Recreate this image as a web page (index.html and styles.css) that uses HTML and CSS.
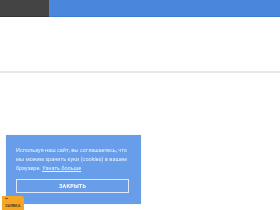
FILE: index.html
```html
<!DOCTYPE html>
<html lang="ru">
<head>
<meta charset="utf-8">
<link rel="stylesheet" href="styles.css">
</head>
<body>
<header class="topbar">
  <div class="topbar-dark"></div>
  <div class="topbar-blue"></div>
</header>
<div class="spacer"></div>
<div class="divider"></div>

<div class="cookie">
  <p class="cookie-text">Используя наш сайт, вы соглашаетесь, что мы можем хранить куки (cookies) в вашем браузере. <a class="cookie-link" href="#">Узнать больше</a></p>
  <button class="cookie-btn">ЗАКРЫТЬ</button>
</div>

<div class="badge"><span class="badge-dot"></span><span class="badge-text">ЗАЯВКА</span></div>
</body>
</html>
```

FILE: styles.css
```css
html, body {
  margin: 0;
  padding: 0;
  background: #ffffff;
  font-family: Roboto, "Liberation Sans", sans-serif;
  width: 280px;
  height: 210px;
  overflow: hidden;
}
.topbar {
  display: flex;
  height: 17px;
}
.topbar-dark {
  width: 49px;
  background: #444444;
  border-bottom: 1px solid #353535;
}
.topbar-blue {
  flex: 1;
  background: #4a87dc;
  border-bottom: 1px solid #3f7bd3;
}
.spacer {
  height: 54px;
}
.divider {
  height: 2px;
  background: #e8e8e8;
}
.cookie {
  position: fixed;
  left: 6px;
  top: 135px;
  width: 135px;
  height: 69px;
  box-sizing: border-box;
  padding: 11px 10px 0 10px;
  background: rgba(96, 152, 232, 0.95);
  box-shadow: 0 0 1px rgba(120, 160, 230, 0.4);
  display: flex;
  flex-direction: column;
}
.cookie-text {
  margin: 0;
  color: #e8f0fc;
  font-size: 5.5px;
  line-height: 9px;
}
.cookie-link {
  color: #e8f0fc;
  text-decoration: underline;
}
.cookie-btn {
  margin-top: 6px;
  height: 14px;
  width: 113px;
  box-sizing: border-box;
  background: transparent;
  border: 1px solid #dfe9fa;
  color: #ffffff;
  font-family: Roboto, "Liberation Sans", sans-serif;
  font-weight: bold;
  font-size: 5.5px;
  padding: 0;
  letter-spacing: 0.2px;
}
.badge {
  position: fixed;
  left: 2px;
  top: 196px;
  width: 22px;
  height: 16px;
  background: #f5a623;
  border-radius: 0 3px 0 0;
}
.badge-dot {
  position: absolute;
  left: 3px;
  top: 2px;
  width: 3px;
  height: 1px;
  background: #7a5a20;
}
.badge-text {
  position: absolute;
  left: 3px;
  top: 7px;
  font-size: 4px;
  color: #5a4520;
  font-weight: bold;
}
```
